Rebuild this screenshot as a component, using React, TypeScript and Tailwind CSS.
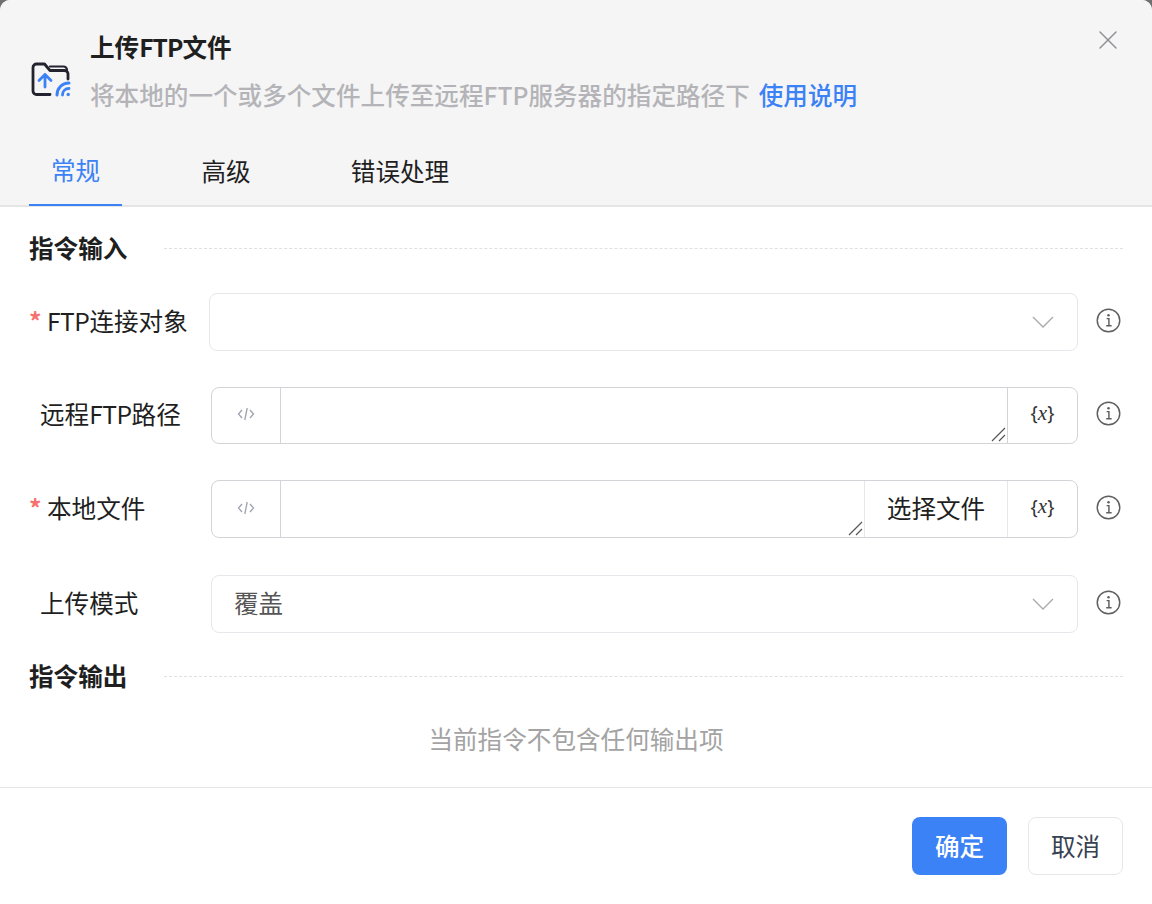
import React from 'react';
import { X } from 'lucide-react';

const FONT = 'font-["Noto_Sans_CJK_SC","Noto_Sans",sans-serif]';

const FolderIcon = () => (
    <svg width="40" height="36" viewBox="0 0 40 36" fill="none">
        <path
            d="M19 32.5H5.5A3.5 3.5 0 0 1 2 29V5.5A3.5 3.5 0 0 1 5.5 2H13.5L19 8.5H33.5A3.5 3.5 0 0 1 37 12V17"
            stroke="#23232f"
            strokeWidth="2.8"
            strokeLinecap="round"
            strokeLinejoin="round"
        />
        <path d="M19 4.5H32.5A3.5 3.5 0 0 1 36 8" stroke="#23232f" strokeWidth="2.2" strokeLinecap="round" />
        <path d="M14 25V12.5M8 18.5L14 12.5L20 18.5" stroke="#3b82f6" strokeWidth="2.8" strokeLinecap="round" strokeLinejoin="round" />
        <path d="M26 33C26 26.5 31 21 38 21" stroke="#3b82f6" strokeWidth="3" strokeLinecap="round" />
        <path d="M31.5 33C31.5 29.5 34 26.5 38 26.5" stroke="#3b82f6" strokeWidth="2.8" strokeLinecap="round" />
        <circle cx="37.2" cy="32.5" r="1.7" fill="#3b82f6" />
    </svg>
);

const ChevronIcon = () => (
    <svg width="22" height="12" viewBox="0 0 22 12" fill="none">
        <path d="M1 1L11 11L21 1" stroke="#a8a8ad" strokeWidth="1.3" />
    </svg>
);

const InfoIcon = () => (
    <svg width="25" height="25" viewBox="0 0 24 24" fill="none" className="shrink-0">
        <circle cx="12" cy="12" r="10.8" stroke="#5f5f5f" strokeWidth="1.4" />
        <path d="M10.2 10.2H12.4V17M9.8 17H15" stroke="#5f5f5f" strokeWidth="1.4" />
        <circle cx="12" cy="7" r="1.2" fill="#5f5f5f" />
    </svg>
);

const CodeIcon = () => (
    <svg width="18" height="16" viewBox="0 0 18 16" fill="none" className="mb-[2px]">
        <path d="M5 4L1.5 8L5 12M13 4L16.5 8L13 12M10.2 2L7.8 14" stroke="#9ca3af" strokeWidth="1.3" />
    </svg>
);

const ResizeGrip = () => (
    <svg width="16" height="16" viewBox="0 0 16 16" fill="none" className="absolute right-[1px] bottom-[1px]">
        <path d="M2 15L15 2M9 15L15 9" stroke="#555" strokeWidth="1.2" />
    </svg>
);

const Ftp = ({ className }: { className?: string }) => <span className={className}>FTP</span>;

const Label = ({ children, required }: { children: React.ReactNode; required?: boolean }) => (
    <div className={`flex shrink-0 items-center pb-[3px] text-[24.6px] text-[#1f1f1f] ${required ? '' : 'pl-[11px]'}`}>
        {required && <span className="w-[18px] font-semibold text-[#f87171]">*</span>}
        {children}
    </div>
);

const SelectBox = ({ value }: { value?: string }) => (
    <div className="flex h-[58px] flex-1 items-center justify-between rounded-lg border border-[#e5e7eb] pr-[23px] pl-[22px] text-[24.6px] text-[#555]">
        <span className="pb-[2px]">{value}</span>
        <ChevronIcon />
    </div>
);

const VarInput = ({ fileButton, height }: { fileButton?: boolean; height: string }) => (
    <div className={`flex flex-1 rounded-lg border border-[#d4d4d8] ${height}`}>
        <div className="flex w-[69px] items-center justify-center border-r border-[#d4d4d8]">
            <CodeIcon />
        </div>
        <div className="relative flex-1">
            <ResizeGrip />
        </div>
        {fileButton && (
            <div className="flex w-[143px] items-center justify-center border-l border-[#e5e7eb] pb-[2px] text-[24.6px] text-[#1f1f1f]">
                选择文件
            </div>
        )}
        <div
            className={`flex w-[70px] items-center justify-center border-l pb-[3px] font-["Noto_Sans",sans-serif] text-[19px] text-[#333] ${fileButton ? 'border-[#e5e7eb]' : 'border-[#d4d4d8]'}`}
        >
            {'{'}
            <i className='font-["Liberation_Serif",serif] text-[21px]'>x</i>
            {'}'}
        </div>
    </div>
);

const SectionTitle = ({ text }: { text: string }) => (
    <div className="flex items-center">
        <span className="-mt-[2px] w-[135px] shrink-0 text-[24.6px] leading-none font-semibold text-[#1f1f1f]">{text}</span>
        <div className="flex-1 border-t border-dashed border-[#e0e0e0]"></div>
    </div>
);

const FormRow = ({ label, labelWidth, children }: { label: React.ReactNode; labelWidth: string; children: React.ReactNode }) => (
    <div className="flex items-center">
        <div className={labelWidth}>{label}</div>
        {children}
        <div className="mb-[3px] flex w-[45px] justify-end pr-[2px]">
            <InfoIcon />
        </div>
    </div>
);

export default function App() {
    return (
        <div className={`h-[904px] w-[1152px] overflow-hidden bg-[#707070] ${FONT}`}>
            <div className="flex h-full flex-col rounded-t-[10px] bg-white">
                {/* Header */}
                <div className="relative h-[207px] shrink-0 rounded-t-[10px] border-b-2 border-[#e5e5e5] bg-[#f5f5f5]">
                    <div className="flex pt-[22px] pl-[31px]">
                        <div className="pt-[40px] pr-[20px]">
                            <FolderIcon />
                        </div>
                        <div className="-ml-[1px]">
                            <div className="text-[24.6px] leading-[48px] font-semibold text-[#1f1f1f]">
                                上传<Ftp className="tracking-[-1px]" />文件
                            </div>
                            <div className="text-[24.6px] leading-[48px] font-medium text-[#b4b4b8]">
                                将本地的一个或多个文件上传至远程<Ftp />服务器的指定路径下
                                <span className="ml-[9px] text-[#3b82f6]">使用说明</span>
                            </div>
                        </div>
                    </div>
                    <X size={32} strokeWidth={1.1} color="#909095" className="absolute top-[24px] right-[28px]" />
                    <div className="absolute bottom-[-1px] left-[29px] flex gap-[56px] text-[24.6px]">
                        <div className="flex h-[64px] w-[93px] items-center justify-center border-b-2 border-[#3b82f6] pb-[8px] text-[#3b82f6]">常规</div>
                        <div className="flex h-[64px] w-[94px] items-center justify-center pb-[8px] pl-[2px] text-[#1f1f1f]">高级</div>
                        <div className="flex h-[64px] w-[144px] items-center justify-center pb-[8px] text-[#1f1f1f]">错误处理</div>
                    </div>
                </div>

                {/* Content */}
                <div className="flex flex-1 flex-col px-[29px] pt-[30px]">
                    <SectionTitle text="指令输入" />
                    <div className="mt-[33px] flex flex-col gap-[36px]">
                        <FormRow label={<Label required><Ftp className="tracking-[-0.5px]" />连接对象</Label>} labelWidth="w-[180px]">
                            <SelectBox />
                        </FormRow>
                        <FormRow label={<Label>远程<Ftp className="tracking-[-0.5px]" />路径</Label>} labelWidth="w-[182px]">
                            <VarInput height="h-[57px]" />
                        </FormRow>
                        <FormRow label={<Label required>本地文件</Label>} labelWidth="w-[182px]">
                            <VarInput fileButton height="h-[58px]" />
                        </FormRow>
                        <div className="mt-[1px]">
                            <FormRow label={<Label>上传模式</Label>} labelWidth="w-[182px]">
                                <SelectBox value="覆盖" />
                            </FormRow>
                        </div>
                    </div>
                    <div className="mt-[32.6px]">
                        <SectionTitle text="指令输出" />
                    </div>
                    <div className="mt-[30px] text-center text-[24.6px] leading-[40px] text-[#a3a3a3]">当前指令不包含任何输出项</div>
                </div>

                {/* Footer */}
                <div className="flex h-[117px] shrink-0 items-start justify-end gap-[21px] border-t border-[#e5e7eb] px-[29px] pt-[29px] text-[24.6px]">
                    <button className="h-[58px] w-[95px] rounded-lg bg-[#3b82f6] pb-[2px] font-medium text-white">确定</button>
                    <button className="h-[58px] w-[95px] rounded-lg border border-[#e5e7eb] bg-white pb-[2px] text-[#374151]">取消</button>
                </div>
            </div>
        </div>
    );
}
